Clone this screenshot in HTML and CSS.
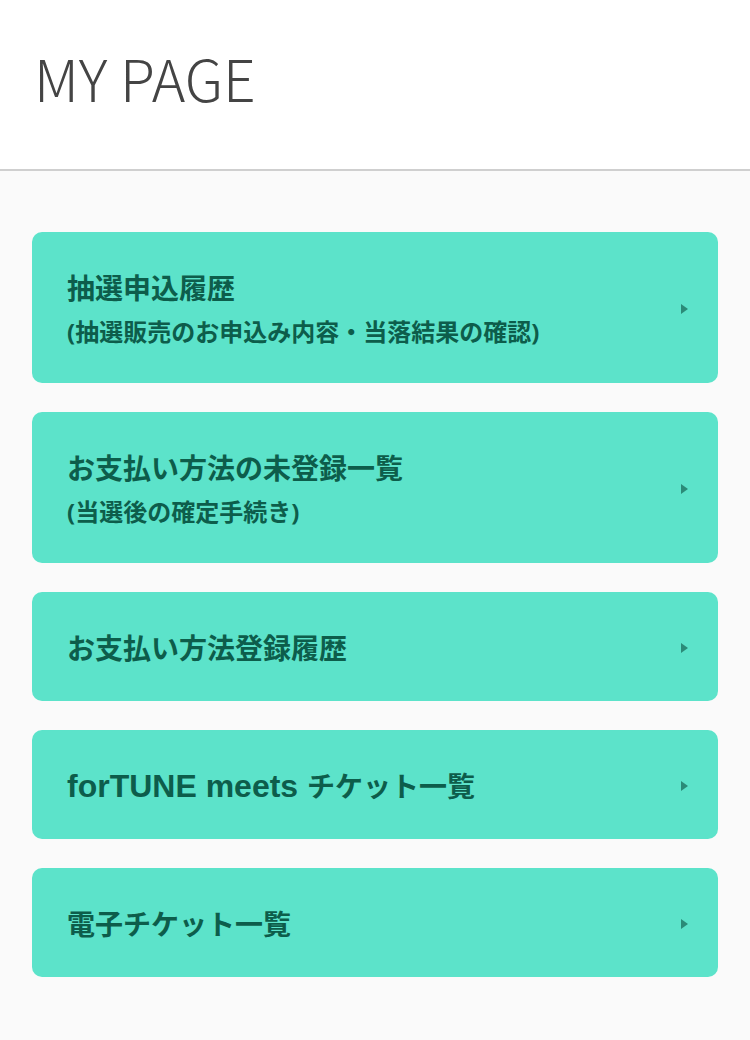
FILE: index.html
```html
<!DOCTYPE html>
<html lang="ja">
<head>
<meta charset="utf-8">
<title>MY PAGE</title>
<link rel="stylesheet" href="styles.css">
</head>
<body>
<header class="page-header">
  <h1 class="page-title">MY PAGE</h1>
</header>
<main class="menu">
  <a class="menu-card" href="#">
    <div class="menu-text">
      <div class="menu-title">抽選申込履歴</div>
      <div class="menu-sub">(抽選販売のお申込み内容・当落結果の確認)</div>
    </div>
    <span class="arrow"></span>
  </a>
  <a class="menu-card" href="#">
    <div class="menu-text">
      <div class="menu-title">お支払い方法の未登録一覧</div>
      <div class="menu-sub">(当選後の確定手続き)</div>
    </div>
    <span class="arrow"></span>
  </a>
  <a class="menu-card" href="#">
    <div class="menu-text">
      <div class="menu-title">お支払い方法登録履歴</div>
    </div>
    <span class="arrow"></span>
  </a>
  <a class="menu-card" href="#">
    <div class="menu-text">
      <div class="menu-title"><span class="latin">forTUNE meets </span>チケット一覧</div>
    </div>
    <span class="arrow"></span>
  </a>
  <a class="menu-card" href="#">
    <div class="menu-text">
      <div class="menu-title">電子チケット一覧</div>
    </div>
    <span class="arrow"></span>
  </a>
</main>
</body>
</html>
```
FILE: styles.css
```css
html, body {
  margin: 0;
  padding: 0;
}
body {
  background: #fafafa;
  font-family: "Open Sans", "Noto Sans CJK JP", sans-serif;
  min-height: 1040px;
}
.page-header {
  background: #ffffff;
  height: 169px;
  border-bottom: 2px solid #cfcfcf;
  box-sizing: content-box;
  display: flex;
  align-items: center;
  padding: 0 34px;
}
.page-title {
  margin: 0;
  margin-top: -14px;
  font-family: "Noto Sans CJK JP", "Open Sans", sans-serif;
  font-weight: 300;
  font-size: 57px;
  line-height: 1;
  color: #444444;
}
.menu {
  display: flex;
  flex-direction: column;
  gap: 29px;
  padding: 61px 32px 0;
}
.menu-card {
  display: flex;
  align-items: center;
  justify-content: space-between;
  background: #5ce3ca;
  border-radius: 10px;
  padding: 35.5px 30px 33.5px 35px;
  text-decoration: none;
  color: #0d5d4b;
  font-weight: 700;
}
.menu-title {
  font-size: 28px;
  line-height: 40px;
}
.latin {
  font-family: "Liberation Sans", "Noto Sans CJK JP", sans-serif;
  font-size: 32px;
  line-height: 1;
}
.menu-sub {
  font-size: 24px;
  line-height: 36px;
  margin-top: 6px;
}
.arrow {
  width: 0;
  height: 0;
  border-top: 5px solid transparent;
  border-bottom: 5px solid transparent;
  border-left: 7px solid #2b8b78;
}
```
